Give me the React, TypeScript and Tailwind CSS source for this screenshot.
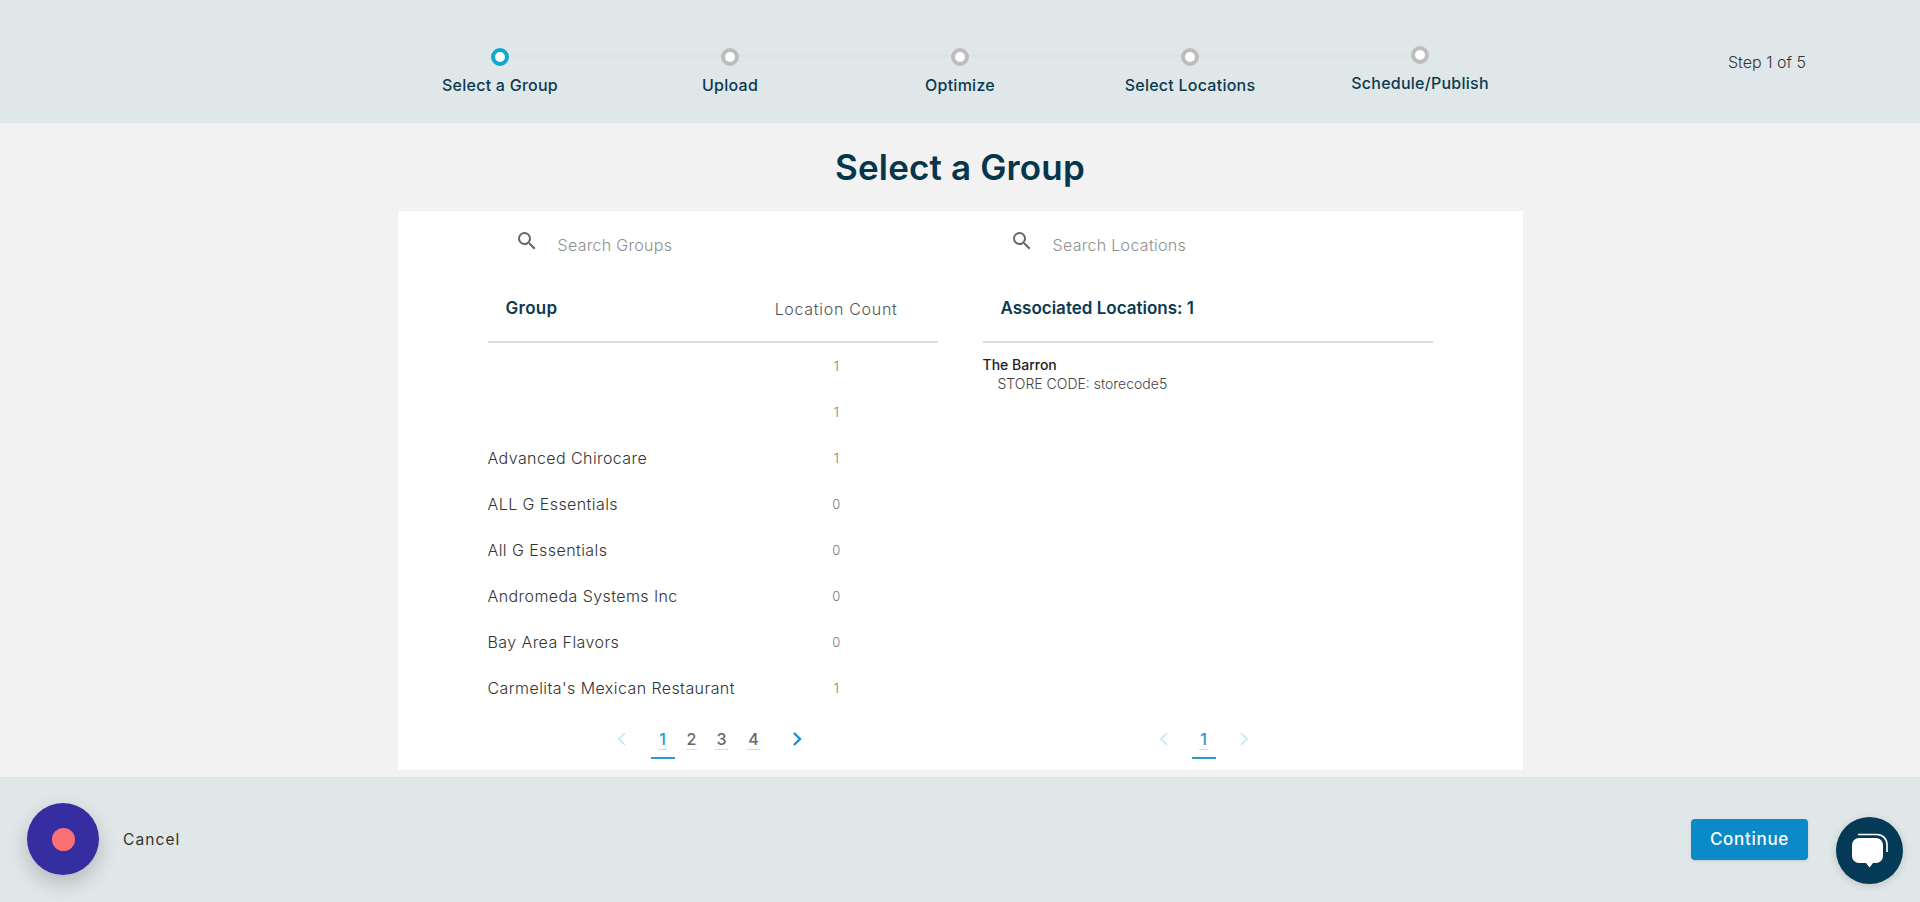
import { MdSearch } from "react-icons/md";

const groups = [
  { name: "", count: 1 },
  { name: "", count: 1 },
  { name: "Advanced Chirocare", count: 1 },
  { name: "ALL G Essentials", count: 0 },
  { name: "All G Essentials", count: 0 },
  { name: "Andromeda Systems Inc", count: 0 },
  { name: "Bay Area Flavors", count: 0 },
  { name: "Carmelita's Mexican Restaurant", count: 1 },
];

const steps = ["Select a Group", "Upload", "Optimize", "Select Locations", "Schedule/Publish"];

function Chevron({ dir, active }: { dir: "left" | "right"; active: boolean }) {
  return (
    <span className="flex h-[47px] w-5 justify-center pt-[21px]">
      <svg width="10" height="14" viewBox="0 0 10 14" fill="none">
        <path
          d={dir === "left" ? "M8 1L2 7l6 6" : "M2 1l6 6-6 6"}
          stroke={active ? "#1a8fd0" : "#c4e4f4"}
          strokeWidth={active ? 2.4 : 1.6}
        />
      </svg>
    </span>
  );
}

function PageNumber({ n, active, className }: { n: number; active?: boolean; className: string }) {
  return (
    <button className={`flex h-[48px] w-6 flex-col items-center pt-[18px] ${active ? "border-b-2 border-[#2a9cc4]" : ""} ${className}`}>
      <span className={`border-b border-[#dcdcdc] px-[1px] text-[16px] leading-[20px] font-medium ${active ? "text-[#2b97d0]" : "text-[#666]"}`}>
        {n}
      </span>
    </button>
  );
}

function SearchBox({ placeholder }: { placeholder: string }) {
  return (
    <div className="flex h-[60px] items-center pl-[27px]">
      <MdSearch className="text-[24px] text-[#666]" />
      <input
        placeholder={placeholder}
        className="mt-[7px] ml-[19px] w-[300px] bg-transparent text-[16px] font-light tracking-[0.3px] outline-none placeholder:text-[#8f8f8f]"
      />
    </div>
  );
}

export default function App() {
  return (
    <div className="flex h-[902px] flex-col overflow-hidden bg-[#f2f2f2] font-['Inter',sans-serif]">
      {/* Stepper */}
      <header className="flex h-[123px] shrink-0 bg-[#e0e7e9] pl-[385px]">
        <div className="relative flex h-full w-[1150px]">
          <div className="absolute top-[55px] left-[115px] h-[2px] w-[920px] bg-[#dde3df]" />
          {steps.map((s, i) => (
            <div key={s} className={`relative flex w-[230px] flex-col items-center ${i === 4 ? "pt-[46px]" : "pt-[48px]"}`}>
              <span className={`h-[18px] w-[18px] rounded-full border-[4px] bg-white ${i === 0 ? "border-[#12a9cf]" : "border-[#bdbdbd]"}`} />
              <span className="mt-[9px] text-[16px] leading-[20px] font-medium tracking-[0.25px] text-[#0b3a4e]">{s}</span>
            </div>
          ))}
        </div>
        <div className="ml-[193px] pt-[52px] text-[16px] leading-[20px] font-light text-[#333]">Step 1 of 5</div>
      </header>

      <main className="flex flex-1 flex-col">
        <h1 className="flex h-[88px] items-center justify-center text-[35px] font-semibold tracking-[0.15px] text-[#06364c]">Select a Group</h1>
        <div className="mx-auto flex h-[559px] w-[1125px] bg-white pl-[90px]">
          {/* Groups */}
          <section className="w-[450px]">
            <SearchBox placeholder="Search Groups" />
            <div className="flex h-[72px] items-center border-b-2 border-[#dddddd] pt-[6px]">
              <span className="pl-[18px] text-[17px] font-semibold tracking-[0.3px] text-[#0b3a4e]">Group</span>
              <span className="ml-auto pr-[40px] text-[16px] font-light tracking-[0.7px] text-[#555]">Location Count</span>
            </div>
            <div>
              {groups.map((g, i) => (
                <div key={i} className="flex h-[46px] items-center text-[16px] font-light tracking-[0.42px] text-[#333]">
                  <span>{g.name}</span>
                  <span className="mr-[86px] ml-auto w-[30px] pt-[1px] text-center text-[13px] text-[#777]">{g.count}</span>
                </div>
              ))}
            </div>
            <nav className="flex pl-[124px]">
              <Chevron dir="left" active={false} />
              <PageNumber n={1} active className="ml-[19px]" />
              <PageNumber n={2} className="ml-[5px]" />
              <PageNumber n={3} className="ml-[6px]" />
              <PageNumber n={4} className="ml-[8px]" />
              <span className="ml-[21px]"><Chevron dir="right" active /></span>
            </nav>
          </section>

          {/* Locations */}
          <section className="ml-[45px] w-[450px]">
            <SearchBox placeholder="Search Locations" />
            <div className="flex h-[72px] items-center border-b-2 border-[#dddddd] pt-[6px]">
              <span className="pl-[18px] text-[17px] font-semibold text-[#0b3a4e]">Associated Locations: 1</span>
            </div>
            <div className="h-[368px] pt-[13px]">
              <div className="text-[14px] leading-[18px] font-medium text-[#222]">The Barron</div>
              <div className="mt-[1px] pl-[15px] text-[14px] leading-[18px] font-light text-[#444]">STORE CODE: storecode5</div>
            </div>
            <nav className="flex pl-[171px]">
              <Chevron dir="left" active={false} />
              <PageNumber n={1} active className="ml-[18px]" />
              <span className="ml-[18px]"><Chevron dir="right" active={false} /></span>
            </nav>
          </section>
        </div>
      </main>

      <footer className="relative flex h-[125px] shrink-0 items-center bg-[#e0e7e9] pr-[112px] pl-[123px]">
        <button className="pt-[1px] text-[15.5px] tracking-[1.1px] text-[#333]">Cancel</button>
        <button className="ml-auto h-[41px] w-[117px] rounded-[4px] bg-[#0a8ac6] text-[17px] font-medium tracking-[0.7px] text-white shadow-sm">
          Continue
        </button>

        {/* recorder widget */}
        <div className="absolute top-[26px] left-[27px] flex h-[72px] w-[72px] items-center justify-center rounded-full bg-[#352ea0] shadow-[0_8px_20px_rgba(0,0,0,0.2)]">
          <span className="h-[23px] w-[23px] rounded-full bg-[#fb7076]" />
        </div>

        {/* chat widget */}
        <div className="absolute top-[40px] left-[1836px] flex h-[67px] w-[67px] items-center justify-center rounded-full bg-[#053a56] shadow-[0_2px_8px_rgba(0,0,0,0.15)]">
          <svg width="67" height="67" viewBox="0 0 67 67" fill="none">
            <path d="M22 17.500h19a10 10 0 0 1 10 10V35" stroke="#fff" strokeWidth="1.6" />
            <path d="M23 21h17a7 7 0 0 1 7 7v11a7 7 0 0 1-7 7h-3l-3.500 4.500L30 46h-7a7 7 0 0 1-7-7V28a7 7 0 0 1 7-7z" fill="#fff" />
          </svg>
        </div>
      </footer>
    </div>
  );
}
